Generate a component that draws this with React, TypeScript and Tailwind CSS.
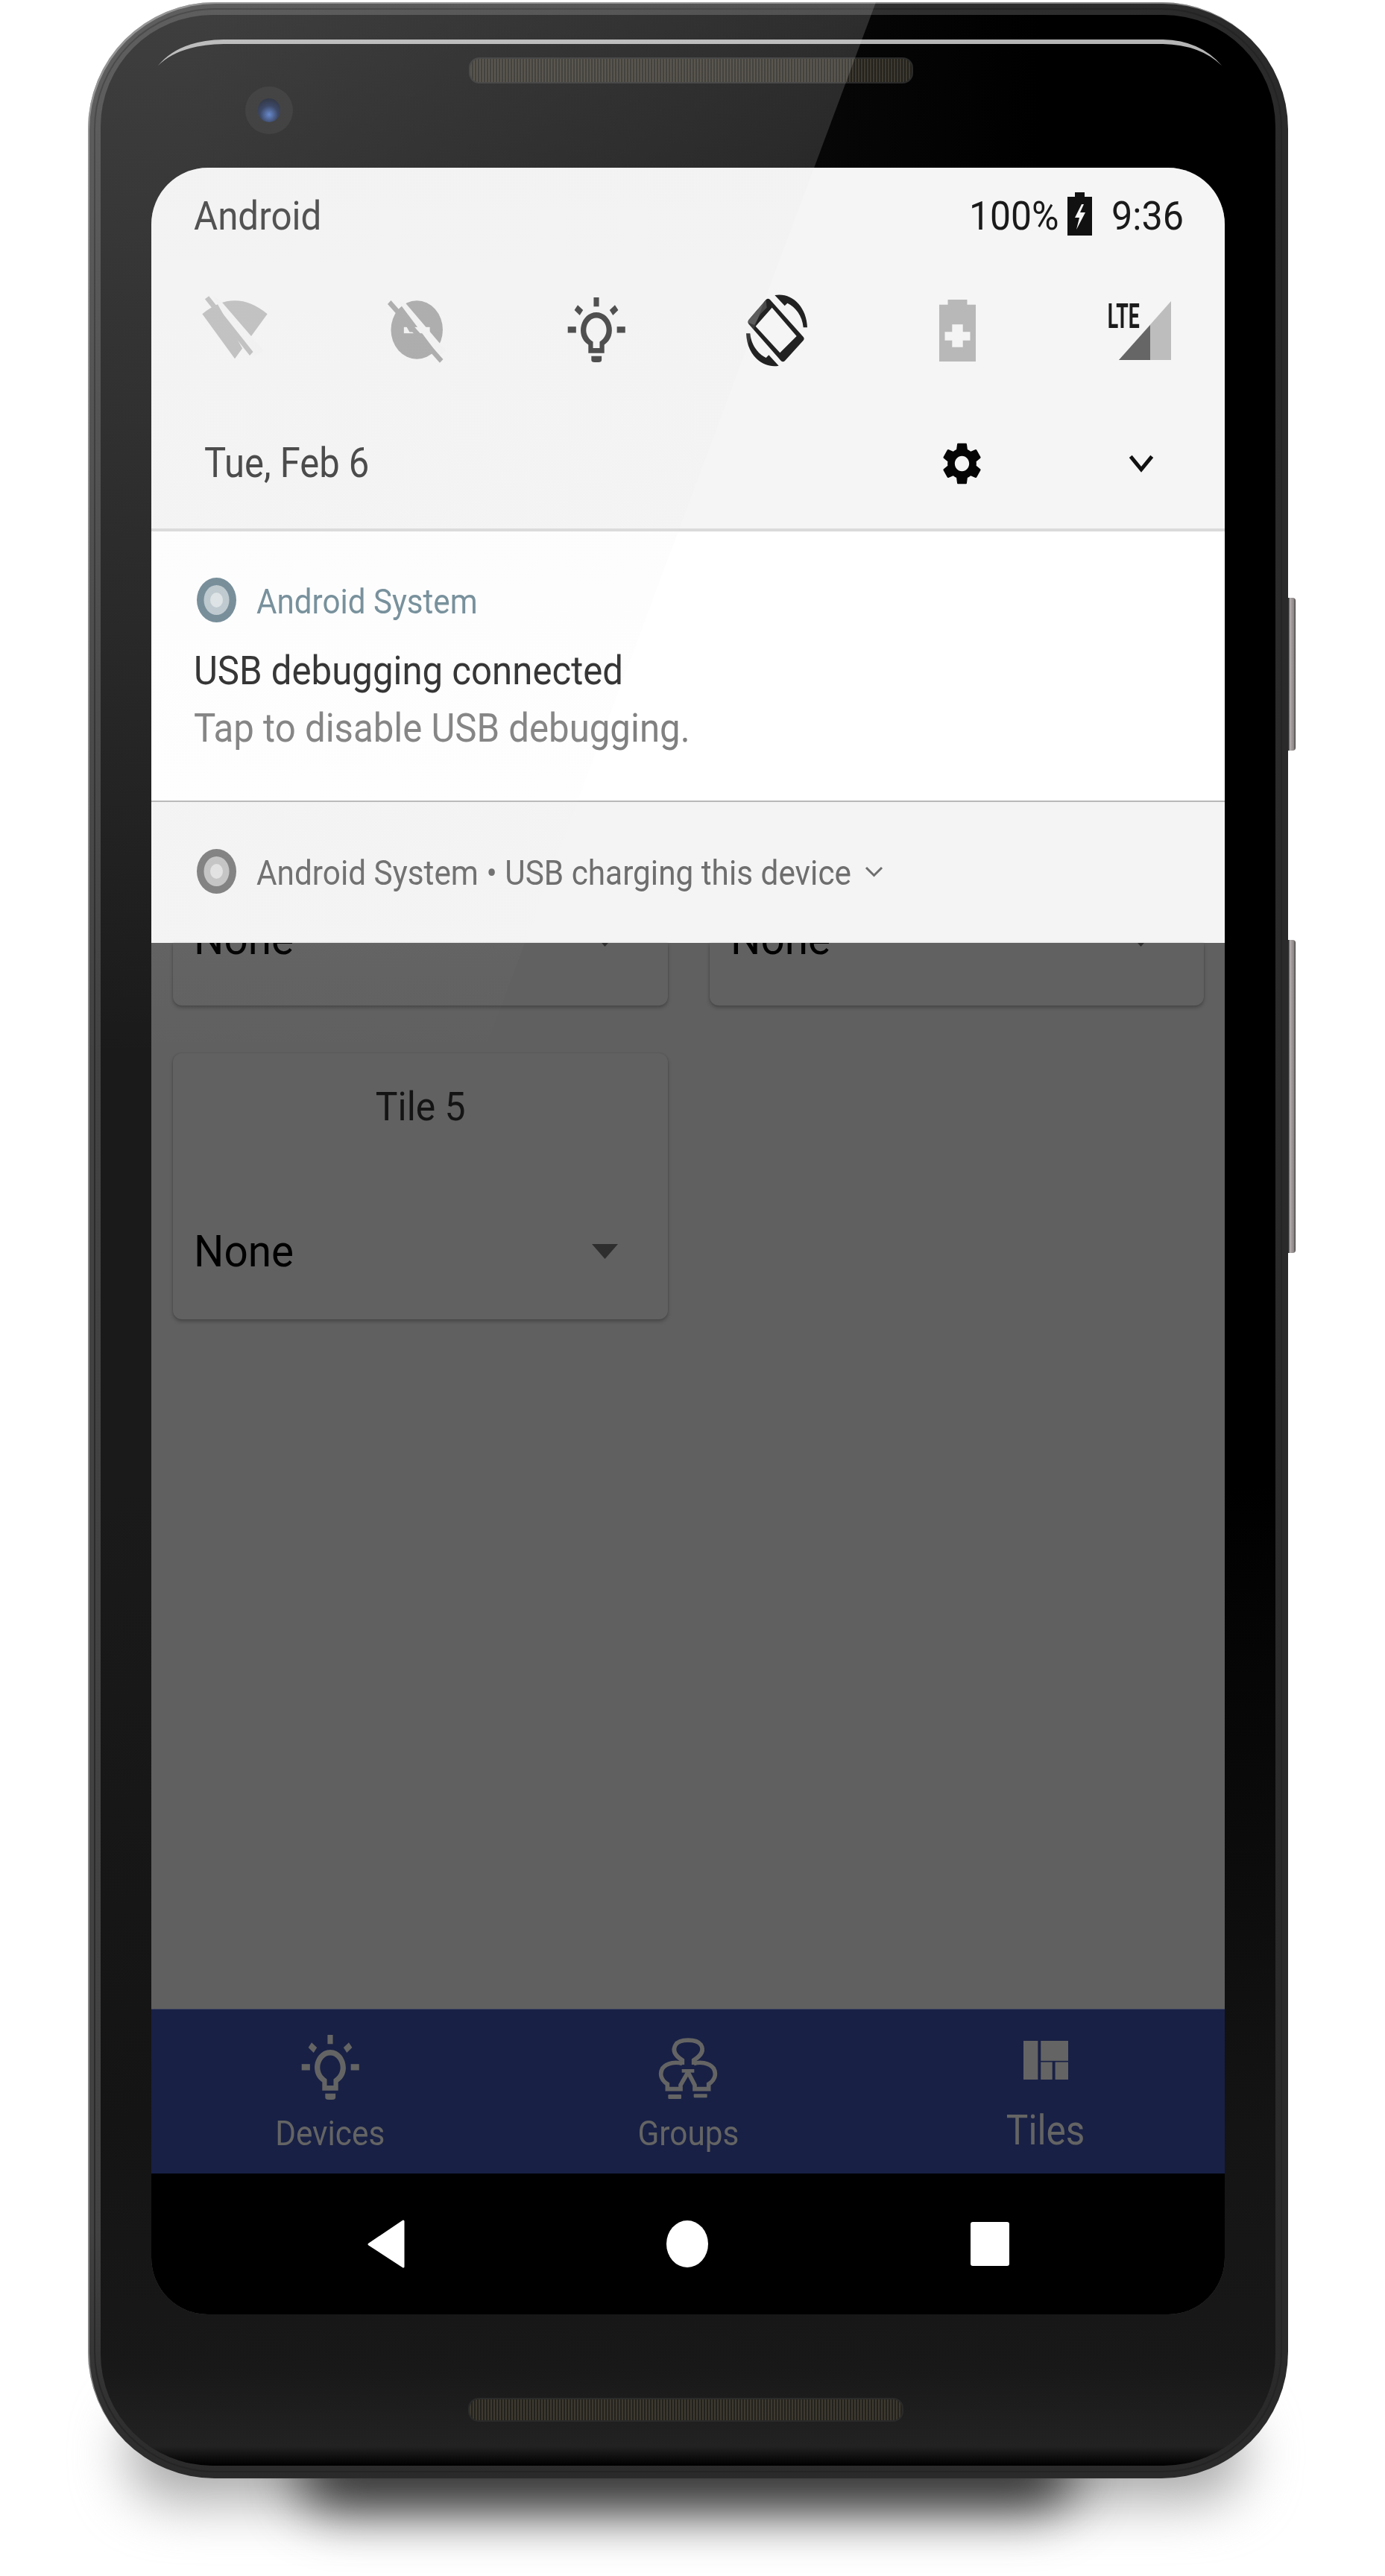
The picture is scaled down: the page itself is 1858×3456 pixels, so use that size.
import React from 'react';

const noWrap = 'inline-block whitespace-nowrap';
const cardShadow = 'shadow-[0_0_2px_rgba(0,0,0,0.15),0_3px_5px_rgba(0,0,0,0.25)]';

// traced over zoomed crops, so the viewBoxes are in crop pixels and get stretched
const WifiOff = () => (
  <svg width={98} height={93} viewBox="148 79 220 280" preserveAspectRatio="none">
    <path d="M160 152 Q258 44 356 152 L258 333 Z" fill="#bdbdbd" />
    <polygon points="192,78 218,102 345,300 318,322 280,290" fill="#f3f3f3" />
    <polygon points="168,92 180,80 313,305 303,320" fill="#bdbdbd" />
  </svg>
);

const DataSaverOff = () => (
  <svg width={98} height={93} viewBox="687 79 220 280" preserveAspectRatio="none">
    <ellipse cx={802} cy={216} rx={78} ry={118} fill="#a6a6a6" />
    <rect x={763} y={205} width={78} height={25} fill="#f3f3f3" />
    <polygon points="745,100 768,108 890,300 868,320" fill="#f3f3f3" />
    <polygon points="714,112 724,97 881,335 871,349" fill="#a6a6a6" />
    <polygon points="740,130 745,135 795,225 780,225" fill="#a6a6a6" />
  </svg>
);

const Bulb = ({ color }: { color: string }) => (
  <svg width={98} height={93} viewBox="1236 79 220 280" preserveAspectRatio="none">
    <g fill={color}>
      <rect x={1338} y={85} width={16} height={37} />
      <rect x={1260} y={203} width={25} height={25} />
      <rect x={1408} y={203} width={25} height={25} />
      <polygon points="1280,136 1290,116 1306,136 1296,157" />
      <polygon points="1386,136 1402,116 1412,136 1396,157" />
      <path d="M1322 310 L1322 276 C1280 240 1300 145 1346 145 C1392 145 1412 240 1370 276 L1370 310 Z M1336 290 L1356 290 L1356 264 C1392 235 1376 168 1346 168 C1316 168 1300 235 1336 264 Z" fillRule="evenodd" />
      <path d="M1331 322 L1362 322 L1362 338 Q1362 347 1352 347 L1341 347 Q1331 347 1331 338 Z" />
    </g>
  </svg>
);

const AutoRotate = () => (
  <svg width={110} height={115} viewBox="0 0 330 345" className="shrink-0">
    <path
      fillRule="evenodd"
      fill="#222"
      d="M122 48 Q130 40 138 48 L272 198 Q278 205 272 212 L198 294 Q190 302 182 294 L52 146 Q46 138 52 130 Z M146 80 L80 155 L178 262 L245 195 Z"
    />
    <polygon points="122,48 52,130 50,140 75,150 100,105 125,80" fill="#4a4a4a" />
    <path d="M157 30 C225 18 285 75 288 160 L272 160 C268 112 240 78 208 62 L197 73 Z" fill="#222" />
    <path d="M157 30 C225 18 285 75 288 160 L272 160 C268 112 240 78 208 62 L197 73 Z" fill="#222" transform="rotate(180 165 172)" />
  </svg>
);

const BatteryPlus = () => (
  <svg width={49} height={83} viewBox="540 1200 85 250" preserveAspectRatio="none">
    <path d="M560 1200 H605 V1220 H625 V1450 H540 V1220 H560 Z" fill="#b8b8b8" />
    <path d="M570 1300 H595 V1330 H612 V1365 H595 V1392 H570 V1365 H553 V1330 H570 Z" fill="#f4f4f4" />
  </svg>
);

const Lte = () => (
  <div className="relative w-[88px] h-[79px]">
    <svg width={88} height={79} viewBox="0 0 88 79" className="block">
      <polygon points="88,0 18,79 88,79" fill="#bdbdbd" />
      <polygon points="60,32 60,79 18,79" fill="#666666" />
    </svg>
    <span className="absolute left-[-12px] top-[-3px] w-[70px] text-center text-[46px] leading-[46px] font-bold text-[#1c1c1c] scale-x-[0.58]">LTE</span>
  </div>
);

const Gear = () => (
  <svg width={51} height={58} viewBox="2.5 1.8 19 20.4" preserveAspectRatio="none">
    <path
      fill="#050505"
      d="M19.14 12.94c.04-.3.06-.61.06-.94 0-.32-.02-.64-.07-.94l2.03-1.58c.18-.14.23-.41.12-.61l-1.92-3.32c-.12-.22-.37-.29-.59-.22l-2.39.96c-.5-.38-1.03-.7-1.62-.94l-.36-2.54c-.04-.24-.24-.41-.48-.41h-3.84c-.24 0-.43.17-.47.41l-.36 2.54c-.59.24-1.13.57-1.62.94l-2.39-.96c-.22-.08-.47 0-.59.22L2.74 8.87c-.12.21-.08.47.12.61l2.03 1.58c-.05.3-.09.63-.09.94s.02.64.07.94l-2.03 1.58c-.18.14-.23.41-.12.61l1.92 3.32c.12.22.37.29.59.22l2.39-.96c.5.38 1.03.7 1.62.94l.36 2.54c.05.24.24.41.48.41h3.84c.24 0 .44-.17.47-.41l.36-2.54c.59-.24 1.13-.56 1.62-.94l2.39.96c.22.08.47 0 .59-.22l1.92-3.32c.12-.22.07-.47-.12-.61l-2.01-1.58zM12 15.6c-1.98 0-3.6-1.62-3.6-3.6s1.62-3.6 3.6-3.6 3.6 1.62 3.6 3.6-1.62 3.6-3.6 3.6z"
    />
  </svg>
);

const Chevron = ({ w, h, width, color }: { w: number; h: number; width: number; color: string }) => (
  <svg width={w} height={h} viewBox="0 0 10 6" preserveAspectRatio="none">
    <polyline points="0.8,0.8 5,5 9.2,0.8" fill="none" stroke={color} strokeWidth={width} vectorEffect="non-scaling-stroke" />
  </svg>
);

const SystemIcon = ({ outer, mid, inner }: { outer: string; mid: string; inner: string }) => (
  <svg width={53} height={60} viewBox="0 0 53 60">
    <ellipse cx={26.5} cy={30} rx={26.5} ry={30} fill={outer} />
    <ellipse cx={26.5} cy={30} rx={17} ry={20} fill={mid} />
    <ellipse cx={26.5} cy={30} rx={8.5} ry={10} fill={inner} />
  </svg>
);

const GroupsIcon = () => (
  <svg width={130} height={110} viewBox="0 0 390 330">
    <g fill="none" stroke="#646464" strokeWidth={17}>
      <path d="M172 150 L172 132 C145 115 130 95 145 70 C160 45 230 45 247 70 C262 95 245 115 218 132 L218 150" />
      <path d="M172 146 C150 138 110 140 92 165 C78 190 90 215 112 228 L112 248 L165 248 L165 232 L195 180" />
      <path d="M218 146 C240 138 280 140 298 165 C312 190 300 215 278 228 L278 248 L222 248 L222 232 L195 180" />
    </g>
    <g fill="#646464">
      <rect x={170} y={168} width={50} height={14} />
      <rect x={115} y={270} width={53} height={18} rx={4} />
      <rect x={218} y={268} width={54} height={15} rx={3} />
    </g>
  </svg>
);

const TilesIcon = () => (
  <svg width={60} height={52} viewBox="1228 235 62 155" preserveAspectRatio="none" fill="#646464">
    <rect x={1228} y={235} width={20} height={155} />
    <rect x={1252} y={235} width={38} height={80} />
    <rect x={1252} y={320} width={16} height={70} />
    <rect x={1272} y={320} width={18} height={70} />
  </svg>
);

const Dropdown = ({ className = '' }: { className?: string }) => (
  <div className={`flex items-center justify-between h-[59px] pl-[28px] pr-[67px] ${className}`}>
    <span className={`${noWrap} origin-left scale-x-[0.96] text-[59px] leading-[59px] text-black`}>None</span>
    <svg width={35} height={20} viewBox="0 0 35 20">
      <polygon points="0,0 35,0 17.5,20" fill="#2e2e2e" />
    </svg>
  </div>
);

const Speaker = ({ className }: { className: string }) => (
  <div className={`rounded-[14px] border-2 border-[#2a2a2a] bg-[#24221d] bg-[repeating-linear-gradient(90deg,rgba(120,112,92,0.3)_0_2px,transparent_2px_4px)] ${className}`} />
);

export default function App() {
  return (
    <div className="relative w-[1858px] h-[3456px] bg-white overflow-hidden font-['Roboto',sans-serif]">
      {/* shadow under the phone */}
      <div className="absolute left-[170px] top-[3230px] w-[1500px] h-[125px] rounded-[80px] bg-[#a8a8a8] blur-[36px]" />
      <div className="absolute left-[400px] top-[3270px] w-[1040px] h-[95px] rounded-[60px] bg-[#2a2a2a] blur-[36px]" />

      {/* side buttons */}
      <div className="absolute left-[1724px] top-[802px] w-[14px] h-[205px] rounded-r-[4px] bg-[linear-gradient(90deg,#333_0%,#333_35%,#b5adad_45%,#8a8484_85%,#333_100%)]" />
      <div className="absolute left-[1724px] top-[1261px] w-[14px] h-[420px] rounded-r-[4px] bg-[linear-gradient(90deg,#333_0%,#333_35%,#b5adad_45%,#8a8484_85%,#333_100%)]" />

      {/* phone */}
      <div className="absolute left-[118px] top-[3px] w-[1610px] h-[3322px] rounded-[170px] overflow-hidden p-[17px] bg-[linear-gradient(180deg,transparent_0%,transparent_90%,#2a2a2a_100%),linear-gradient(90deg,#424242_0%,#383838_40%,#2e2e2e_70%,#2a2a2a_100%)] shadow-[inset_2px_2px_0_#858585]">
        <div className="absolute inset-[8px] rounded-[162px] border-2 border-[#222]/70" />
        <div className="relative h-full rounded-[150px] overflow-hidden bg-[linear-gradient(180deg,transparent_0%,transparent_60%,#141414_86%,#181818_96%,#222_99.2%,#000_100%),linear-gradient(90deg,#1a1a1a_0%,#1a1a1a_8%,#000_80%)]">
          <svg className="absolute left-0 top-0" width={1576} height={80} viewBox="135 20 1576 80">
            <path d="M212 88 Q240 54 300 53 L1560 53 Q1610 54 1639 88 Q1610 60 1560 59 L300 59 Q240 60 212 88 Z" fill="#b5b5b5" />
          </svg>

          <div className="relative h-[205px] pt-[57px]">
            <Speaker className="ml-[494px] w-[596px] h-[35px]" />
            <div className="absolute left-[194px] top-[96px] w-[64px] h-[64px] rounded-full bg-[#242424] flex items-center justify-center">
              <div className="w-[30px] h-[32px] rounded-full bg-[radial-gradient(circle_at_50%_68%,#4f78c8_0%,#1c2a4e_45%,#0a0c14_100%)]" />
            </div>
          </div>

          <div className="ml-[68px] w-[1440px] h-[2880px] rounded-[76px] overflow-hidden flex flex-col bg-[#606060]">
            {/* quick settings */}
            <div className="h-[484px] bg-[#f5f5f5] pt-[39px]">
              <div className="flex items-center h-[53px] pl-[57px] pr-[57px]">
                <span className={`${noWrap} origin-left scale-x-[0.93] text-[53px] leading-[53px] text-[#3a3a3a]`}>Android</span>
                <span className={`${noWrap} origin-left scale-x-[0.94] ml-auto w-[117px] text-[53px] leading-[53px] text-[#1a1a1a]`}>100%</span>
                <svg className="ml-[15px] mb-[7px]" width={33} height={58} viewBox="0 0 33 58">
                  <path fillRule="evenodd" d="M10 0 H23 V6 H33 V58 H0 V6 H10 Z M19 16 L10 34 H16 L12 50 L24 27 H17 L22 16 Z" fill="#111" />
                </svg>
                <span className={`${noWrap} origin-left scale-x-[0.95] ml-[26px] w-[95px] text-[53px] leading-[53px] text-[#1a1a1a]`}>9:36</span>
              </div>
              <div className="flex items-center justify-between h-[96px] mt-[78px] pl-[62px] pr-[66px]">
                <div className="w-[100px] flex justify-center"><WifiOff /></div>
                <div className="w-[100px] flex justify-center"><DataSaverOff /></div>
                <div className="w-[100px] flex justify-center"><Bulb color="#3a3a3a" /></div>
                <div className="w-[100px] flex justify-center"><AutoRotate /></div>
                <div className="w-[100px] flex justify-center"><BatteryPlus /></div>
                <div className="w-[100px] flex justify-center"><Lte /></div>
              </div>
              <div className="flex items-center h-[55px] mt-[103px] pl-[71px] pr-[95px]">
                <span className={`${noWrap} origin-left scale-x-[0.89] text-[55px] leading-[55px] text-[#3a3a3a]`}>Tue, Feb 6</span>
                <div className="ml-auto mr-[198px]"><Gear /></div>
                <Chevron w={34} h={25} width={5} color="#111" />
              </div>
            </div>

            {/* notifications */}
            <div className="h-[4px] bg-[#dadada]" />
            <div className="h-[361px] bg-white pl-[57px] pt-[62px]">
              <div className="flex items-center h-[60px] gap-[27px] pl-[4px]">
                <SystemIcon outer="#6f8894" mid="#bcc8ce" inner="#dde3e6" />
                <span className={`${noWrap} origin-left scale-x-[0.916] mt-[4px] text-[46px] leading-[46px] text-[#6f8a96]`}>Android System</span>
              </div>
              <div className="mt-[38px] h-[54px]">
                <span className={`${noWrap} origin-left scale-x-[0.91] text-[54px] leading-[54px] text-[#2a2a2a]`}>USB debugging connected</span>
              </div>
              <div className="mt-[23px] h-[54px]">
                <span className={`${noWrap} origin-left scale-x-[0.91] text-[54px] leading-[54px] text-[#808080]`}>Tap to disable USB debugging.</span>
              </div>
            </div>
            <div className="h-[2px] bg-[#b8b8b8]" />
            <div className="h-[189px] bg-[#f4f4f4] pl-[61px] pt-[63px]">
              <div className="flex items-center h-[60px] gap-[27px]">
                <SystemIcon outer="#808080" mid="#c4c4c4" inner="#e2e2e2" />
                <span className={`${noWrap} origin-left scale-x-[0.92] mt-[4px] w-[789px] text-[46px] leading-[46px] text-[#6e6e6e]`}>Android System • USB charging this device</span>
                <Chevron w={25} h={15} width={3} color="#6e6e6e" />
              </div>
            </div>

            {/* dimmed app behind the shade */}
            <div className="flex-1 bg-[#606060] pl-[29px] pr-[28px]">
              <div className="grid grid-cols-2 gap-x-[56px] gap-y-[64px]">
                <div className={`h-[84px] overflow-hidden flex flex-col justify-end pb-[60px] rounded-b-[12px] bg-[#616161] ${cardShadow}`}>
                  <Dropdown className="shrink-0" />
                </div>
                <div className={`h-[84px] overflow-hidden flex flex-col justify-end pb-[60px] rounded-b-[12px] bg-[#616161] ${cardShadow}`}>
                  <Dropdown className="shrink-0" />
                </div>
                <div className={`h-[357px] pt-[46px] rounded-[12px] bg-[#616161] ${cardShadow}`}>
                  <div className="text-center h-[53px]">
                    <span className={`${noWrap} scale-x-[0.94] text-[53px] leading-[53px] text-[#141414]`}>Tile 5</span>
                  </div>
                  <Dropdown className="mt-[137px]" />
                </div>
              </div>
            </div>

            {/* bottom tabs */}
            <div className="h-[221px] bg-[#182045] border-t border-[#3c4362] grid grid-cols-3">
              <div className="flex flex-col items-center pt-[32px]">
                <Bulb color="#646464" />
                <span className={`${noWrap} scale-x-[0.9] mt-[17px] text-[47px] leading-[47px] text-[#646464]`}>Devices</span>
              </div>
              <div className="flex flex-col items-center pt-[24px]">
                <GroupsIcon />
                <span className={`${noWrap} scale-x-[0.9] mt-[8px] text-[47px] leading-[47px] text-[#646464]`}>Groups</span>
              </div>
              <div className="flex flex-col items-center pt-[42px]">
                <TilesIcon />
                <span className={`${noWrap} scale-x-[0.9] mt-[41px] text-[55px] leading-[55px] text-[#646464]`}>Tiles</span>
              </div>
            </div>

            {/* android nav bar */}
            <div className="h-[189px] bg-black flex items-center pl-[289px] gap-[351px]">
              <svg width={51} height={65} viewBox="0 0 51 65">
                <polygon points="49,2 49,63 3,33" fill="#fff" stroke="#fff" strokeWidth={3} strokeLinejoin="round" />
              </svg>
              <div className="w-[56px] h-[63px] rounded-[50%] bg-white" />
              <div className="w-[52px] h-[59px] ml-[1px] rounded-[3px] bg-white" />
            </div>
          </div>

          <div className="pt-[112px]">
            <Speaker className="ml-[493px] w-[584px] h-[32px]" />
          </div>
        </div>

        {/* glass reflection across the top left */}
        <div className="absolute left-0 top-0 w-[1100px] h-[1420px] bg-[linear-gradient(180deg,rgba(230,230,230,0.18)_0%,rgba(230,230,230,0)_100%)] [clip-path:polygon(0_0,1057px_0,527px_1420px,0_1420px)]" />
      </div>
    </div>
  );
}
